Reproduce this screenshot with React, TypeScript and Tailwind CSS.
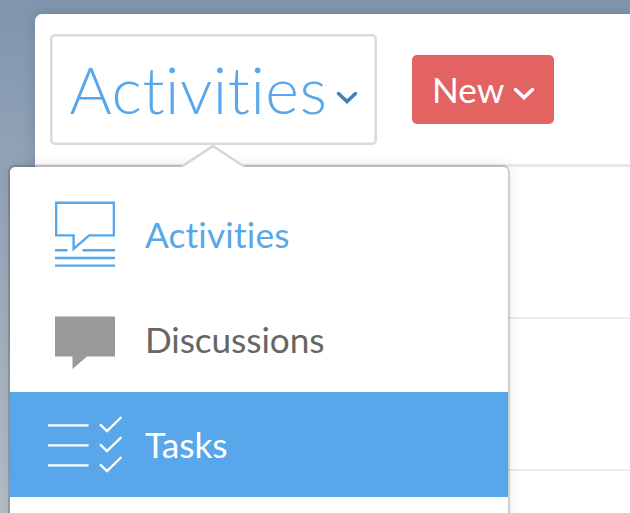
import type { ReactNode } from "react";

function Chevron({ className }: { className: string }) {
  return (
    <svg className={className} width="22" height="14" viewBox="0 0 22 14" fill="none" stroke="currentColor" strokeWidth="3.4" strokeLinecap="round" strokeLinejoin="miter">
      <path d="M2.5 2.5L11 10.6L19.5 2.5" />
    </svg>
  );
}

function ActivityIcon() {
  return (
    <svg className="-mt-px" width="60" height="66" viewBox="0 0 60 66" fill="none" stroke="#57a7ea" strokeWidth="2.4">
      <path d="M1.1 1.8H58.9V34.4H34.2L18.6 47.9V34.4H1.1Z" />
      <path d="M0 49.3H12.5M27.5 49.3H60M0 57H60M0 64.6H60" />
    </svg>
  );
}

function DiscussionIcon() {
  return (
    <svg className="mt-[6px]" width="60" height="53" viewBox="0 0 60 53" fill="#999">
      <path d="M0 .5H60V40.5H32L17.5 53V40.5H0Z" />
    </svg>
  );
}

function TasksIcon() {
  return (
    <svg width="75" height="58" viewBox="0 0 75 58" fill="none" stroke="white" strokeWidth="2.4">
      <path d="M0 9.4H40.5M0 29.4H40.5M0 49.4H40.5" />
      <path d="M52 8.3L59 15L73.5 1M52 28.3L59 35L73.5 21M52 48.3L59 55L73.5 41" />
    </svg>
  );
}

function MenuItem({ icon, label, className }: { icon: ReactNode; label: string; className: string }) {
  return (
    <div className={`flex h-[105px] items-center text-[35.2px] leading-none ${className}`}>
      <div className="flex w-[135px] shrink-0 justify-center">
        <div className="flex w-[150px] shrink-0 justify-center pl-[15px]">{icon}</div>
      </div>
      <span className="pt-px">{label}</span>
    </div>
  );
}

export default function App() {
  return (
    <div className="relative h-[513px] w-[630px] overflow-hidden bg-linear-to-b from-[#8096ae] to-[#b6bec7] pt-[14px] pl-[35px] font-['Lato',sans-serif] [font-variant-ligatures:none]">
      <main className="h-[520px] w-[620px] rounded-tl-[7px] bg-white shadow-[0_0_14px_rgba(60,70,90,0.25)]">
        <header className="flex h-[153px] items-start border-b-3 border-[#e9e9e9] pt-5 pl-[15px]">
          <button className="flex h-[111px] w-[327px] items-center rounded-[5px] border-2 border-[#d9d9d9] pl-[17.5px] text-[#57a7ea] shadow-[inset_0_0_0_1px_#ebebeb]">
            <span className="text-[64.5px] leading-none font-light tracking-[0.55px]">Activities</span>
            <Chevron className="mt-[17px] ml-[9px] shrink-0 text-[#467fb4]" />
          </button>
          <button className="mt-[21px] ml-[35px] flex h-[69px] w-[142px] items-center rounded-[5px] bg-[#e36363] pl-5 text-white">
            <span className="text-[35.2px] leading-none">New</span>
            <Chevron className="mt-[9px] ml-[9px] shrink-0" />
          </button>
        </header>
        <div className="h-[152px] border-b-2 border-[#ececec]" />
        <div className="h-[152px] border-b-2 border-[#ececec]" />
      </main>
      <nav className="absolute top-[167px] left-[10px] h-[380px] w-[498px] rounded-t-[5px] bg-white pt-[15px] shadow-[0_0_0_2px_rgba(0,0,0,0.15),0_0_15px_rgba(0,0,0,0.12)]">
        <svg className="absolute -top-[23px] left-[172px]" width="63" height="25" viewBox="0 0 63 25" fill="none">
          <path d="M1 22L31.5 2L62 22V25H1Z" fill="white" />
          <path d="M0 22.5L31 2L62 22.5" stroke="#d6d6d6" strokeWidth="2.3" />
        </svg>
        <MenuItem icon={<ActivityIcon />} label="Activities" className="tracking-[0.2px] text-[#57a7ea]" />
        <MenuItem icon={<DiscussionIcon />} label="Discussions" className="tracking-[-0.08px] text-[#666]" />
        <MenuItem icon={<TasksIcon />} label="Tasks" className="bg-[#57a7ea] text-white" />
      </nav>
    </div>
  );
}
